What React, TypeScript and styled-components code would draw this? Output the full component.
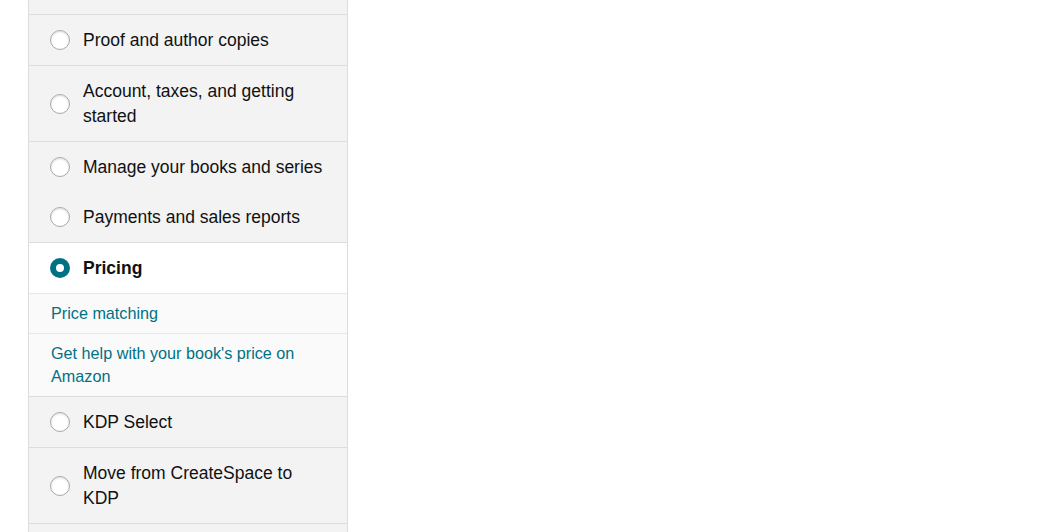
import styled, { createGlobalStyle } from "styled-components";

const GlobalStyle = createGlobalStyle`
  html, body {
    margin: 0;
    padding: 0;
    background: #ffffff;
    font-family: "Liberation Sans", Arial, sans-serif;
    color: #0f1111;
  }
`;

type Topic = {
  label: string;
  topBorder?: boolean;
  selected?: boolean;
  links?: string[];
};

// the list is scrolled: the first topic sits above the top edge
const topics: Topic[] = [
  { label: "Create content" },
  { label: "Proof and author copies" },
  { label: "Account, taxes, and getting started" },
  { label: "Manage your books and series" },
  { label: "Payments and sales reports", topBorder: false },
  {
    label: "Pricing",
    selected: true,
    links: ["Price matching", "Get help with your book's price on Amazon"],
  },
  { label: "KDP Select" },
  { label: "Move from CreateSpace to KDP" },
  { label: "Marketing and promotion" },
];

const Page = styled.div`
  padding-left: 28px;
  height: 532px;
  overflow: hidden;
`;

const Panel = styled.div`
  width: 318px;
  margin-top: -37px;
  border-left: 1px solid #dddddd;
  border-right: 1px solid #dddddd;
  background: #f3f3f3;
`;

const TopicRow = styled.div<{ $border: boolean; $selected: boolean }>`
  display: flex;
  align-items: center;
  gap: 13px;
  padding: 12.5px 20px 12.5px 21px;
  border-top: ${({ $border }) => ($border ? "1px solid #dddddd" : "none")};
  background: ${({ $selected }) => ($selected ? "#ffffff" : "#f3f3f3")};
  cursor: pointer;
`;

const Radio = styled.span<{ $checked: boolean }>`
  flex: 0 0 auto;
  box-sizing: border-box;
  width: 20px;
  height: 20px;
  border-radius: 50%;
  background: #ffffff;
  border: ${({ $checked }) =>
    $checked ? "6px solid #007185" : "1px solid #a9a9a9"};
  box-shadow: ${({ $checked }) =>
    $checked ? "none" : "inset 0 1px 2px rgba(15, 17, 17, 0.15)"};
`;

const TopicLabel = styled.span<{ $bold: boolean }>`
  font-size: 17.5px;
  line-height: 25px;
  font-weight: ${({ $bold }) => ($bold ? 700 : 400)};
  color: #0f1111;
`;

const SubLink = styled.a`
  display: block;
  padding: 8px 40px 8px 22px;
  border-top: 1px solid #e7e7e7;
  background: #fafafa;
  font-size: 16.2px;
  line-height: 23px;
  color: #007185;
  text-decoration: none;
  cursor: pointer;
`;

const App = () => {
  return (
    <>
      <GlobalStyle />
      <Page>
        <Panel>
          {topics.map((topic) => (
            <div key={topic.label}>
              <TopicRow
                $border={topic.topBorder !== false}
                $selected={!!topic.selected}
              >
                <Radio $checked={!!topic.selected} />
                <TopicLabel $bold={!!topic.selected}>{topic.label}</TopicLabel>
              </TopicRow>
              {topic.links?.map((link) => (
                <SubLink key={link}>{link}</SubLink>
              ))}
            </div>
          ))}
        </Panel>
      </Page>
    </>
  );
};

export default App;
